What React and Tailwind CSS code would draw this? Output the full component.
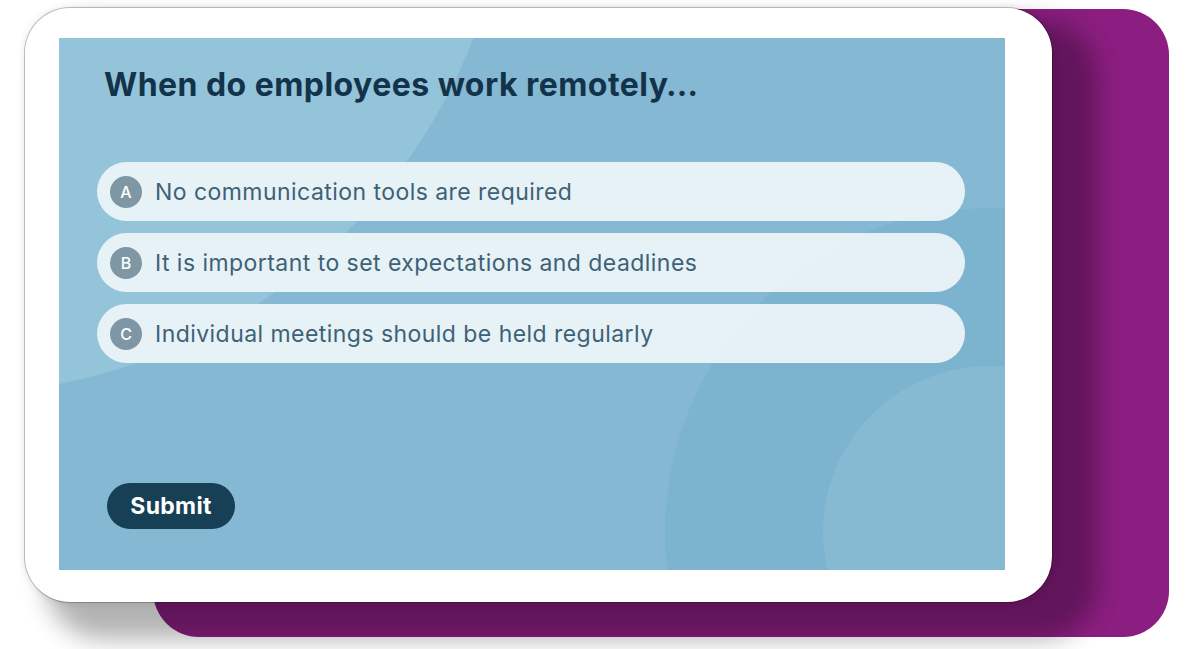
import React from 'react';

const options = [
    { letter: 'A', text: 'No communication tools are required' },
    { letter: 'B', text: 'It is important to set expectations and deadlines' },
    { letter: 'C', text: 'Individual meetings should be held regularly' },
];

const App = () => {
    return (
        <div className="relative w-[1200px] h-[649px] overflow-hidden bg-white font-['Inter',sans-serif]">
            {/* purple slab behind the device */}
            <div className="absolute left-[153px] top-[9px] w-[1016px] h-[628px] rounded-[46px] bg-[#8b1e80]" />

            <div className="relative pl-[25px] pt-[8px]">
                <div className="w-[1027px] h-[594px] rounded-[45px] bg-white pl-[34px] pt-[30px] shadow-[0_0_0_1px_rgba(0,0,0,0.22),0_0_8px_rgba(0,0,0,0.12),33px_25px_24px_12px_rgba(0,0,0,0.3)]">
                    <div className="relative w-[946px] h-[532px] overflow-hidden bg-[#85b9d3]">
                        {/* background circles */}
                        <div className="absolute left-[-662px] top-[-758px] w-[1114px] h-[1114px] rounded-full bg-[#94c4da]" />
                        <div className="absolute left-[606px] top-[170px] w-[648px] h-[648px] rounded-full bg-[#7cb4cf]" />
                        <div className="absolute left-[764px] top-[328px] w-[332px] h-[332px] rounded-full bg-[#86bad3]" />

                        <div className="relative flex flex-col h-full">
                            <h1 className="pl-[45px] pt-[28px] text-[32px] leading-[38px] font-bold text-[#13334a] tracking-[0.45px]">
                                When do employees work remotely…
                            </h1>

                            <div className="mt-[58px] ml-[38px] w-[868px] flex flex-col gap-[12px]">
                                {options.map((o) => (
                                    <div
                                        key={o.letter}
                                        className="h-[59px] rounded-full bg-[#ebf4f8]/95 flex items-center pl-[13px] gap-[13px]"
                                    >
                                        <span className="w-[32px] h-[32px] rounded-full bg-[#7f97a4] text-white text-[16px] font-medium flex items-center justify-center">
                                            {o.letter}
                                        </span>
                                        <span className="pt-[2px] text-[23px] text-[#3e6176] tracking-[0.45px]">{o.text}</span>
                                    </div>
                                ))}
                            </div>

                            <button className="mt-auto mb-[41px] ml-[48px] w-[128px] h-[46px] rounded-full bg-[#173f55] text-white text-[23px] font-bold tracking-[0.3px]">
                                Submit
                            </button>
                        </div>
                    </div>
                </div>
            </div>
        </div>
    );
};

export default App;
